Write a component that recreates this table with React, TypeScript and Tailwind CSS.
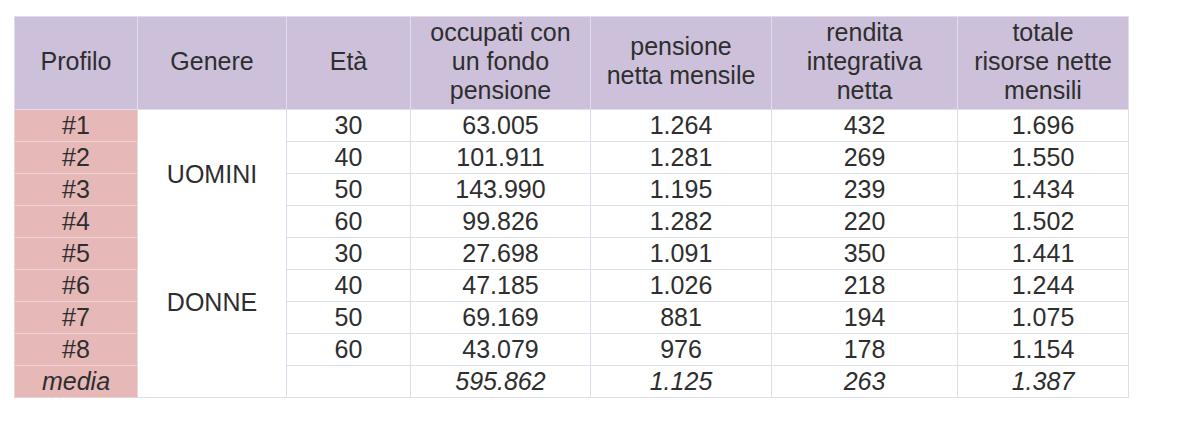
import React from "react";

const rows = [
  ["#1", "30", "63.005", "1.264", "432", "1.696"],
  ["#2", "40", "101.911", "1.281", "269", "1.550"],
  ["#3", "50", "143.990", "1.195", "239", "1.434"],
  ["#4", "60", "99.826", "1.282", "220", "1.502"],
  ["#5", "30", "27.698", "1.091", "350", "1.441"],
  ["#6", "40", "47.185", "1.026", "218", "1.244"],
  ["#7", "50", "69.169", "881", "194", "1.075"],
  ["#8", "60", "43.079", "976", "178", "1.154"],
];

const widths = [123, 149, 124, 180, 181, 186, 171];

export default function App() {
  const td = "border border-[#dcdfeb] h-[32px] p-0 pb-[2px] text-center align-middle leading-[28px]";
  const th = "border border-[#e2dcea] bg-[#ccc0da] font-normal p-0 pb-[4px] text-center align-middle leading-[29px]";
  const pink = "border border-[#ecd3d3] bg-[#e6b8b7] h-[32px] p-0 pb-[2px] text-center align-middle leading-[28px]";
  return (
    <div className="w-[1200px] h-[437px] bg-white pt-4 pl-[14px]" style={{ fontFamily: '"Liberation Sans", Arial, sans-serif' }}>
      <table className="table-fixed border-collapse text-[25px] text-[#2e2e2e] w-[1114px]">
        <colgroup>
          {widths.map((w, i) => (
            <col key={i} style={{ width: w }} />
          ))}
        </colgroup>
        <thead>
          <tr className="h-[93px]">
            <th className={th}>Profilo</th>
            <th className={th}>Genere</th>
            <th className={th}>Età</th>
            <th className={th}>occupati con<br />un fondo<br />pensione</th>
            <th className={th}>pensione<br />netta mensile</th>
            <th className={th}>rendita<br />integrativa<br />netta</th>
            <th className={th}>totale<br />risorse nette<br />mensili</th>
          </tr>
        </thead>
        <tbody>
          {rows.map((r, i) => (
            <tr key={i}>
              <td className={pink}>{r[0]}</td>
              {i === 0 && (
                <td rowSpan={4} className="border-x border-x-[#dcdfeb] border-y-0 p-0 text-center align-middle leading-[28px]">UOMINI</td>
              )}
              {i === 4 && (
                <td rowSpan={4} className="border-x border-x-[#dcdfeb] border-y-0 p-0 text-center align-middle leading-[28px]">DONNE</td>
              )}
              {r.slice(1).map((v, j) => (
                <td key={j} className={td}>{v}</td>
              ))}
            </tr>
          ))}
          <tr className="italic">
            <td className={pink}>media</td>
            <td className="border-x border-b border-x-[#dcdfeb] border-b-[#dcdfeb] border-t-0 p-0"></td>
            <td className={td}></td>
            <td className={td}>595.862</td>
            <td className={td}>1.125</td>
            <td className={td}>263</td>
            <td className={td}>1.387</td>
          </tr>
        </tbody>
      </table>
    </div>
  );
}
